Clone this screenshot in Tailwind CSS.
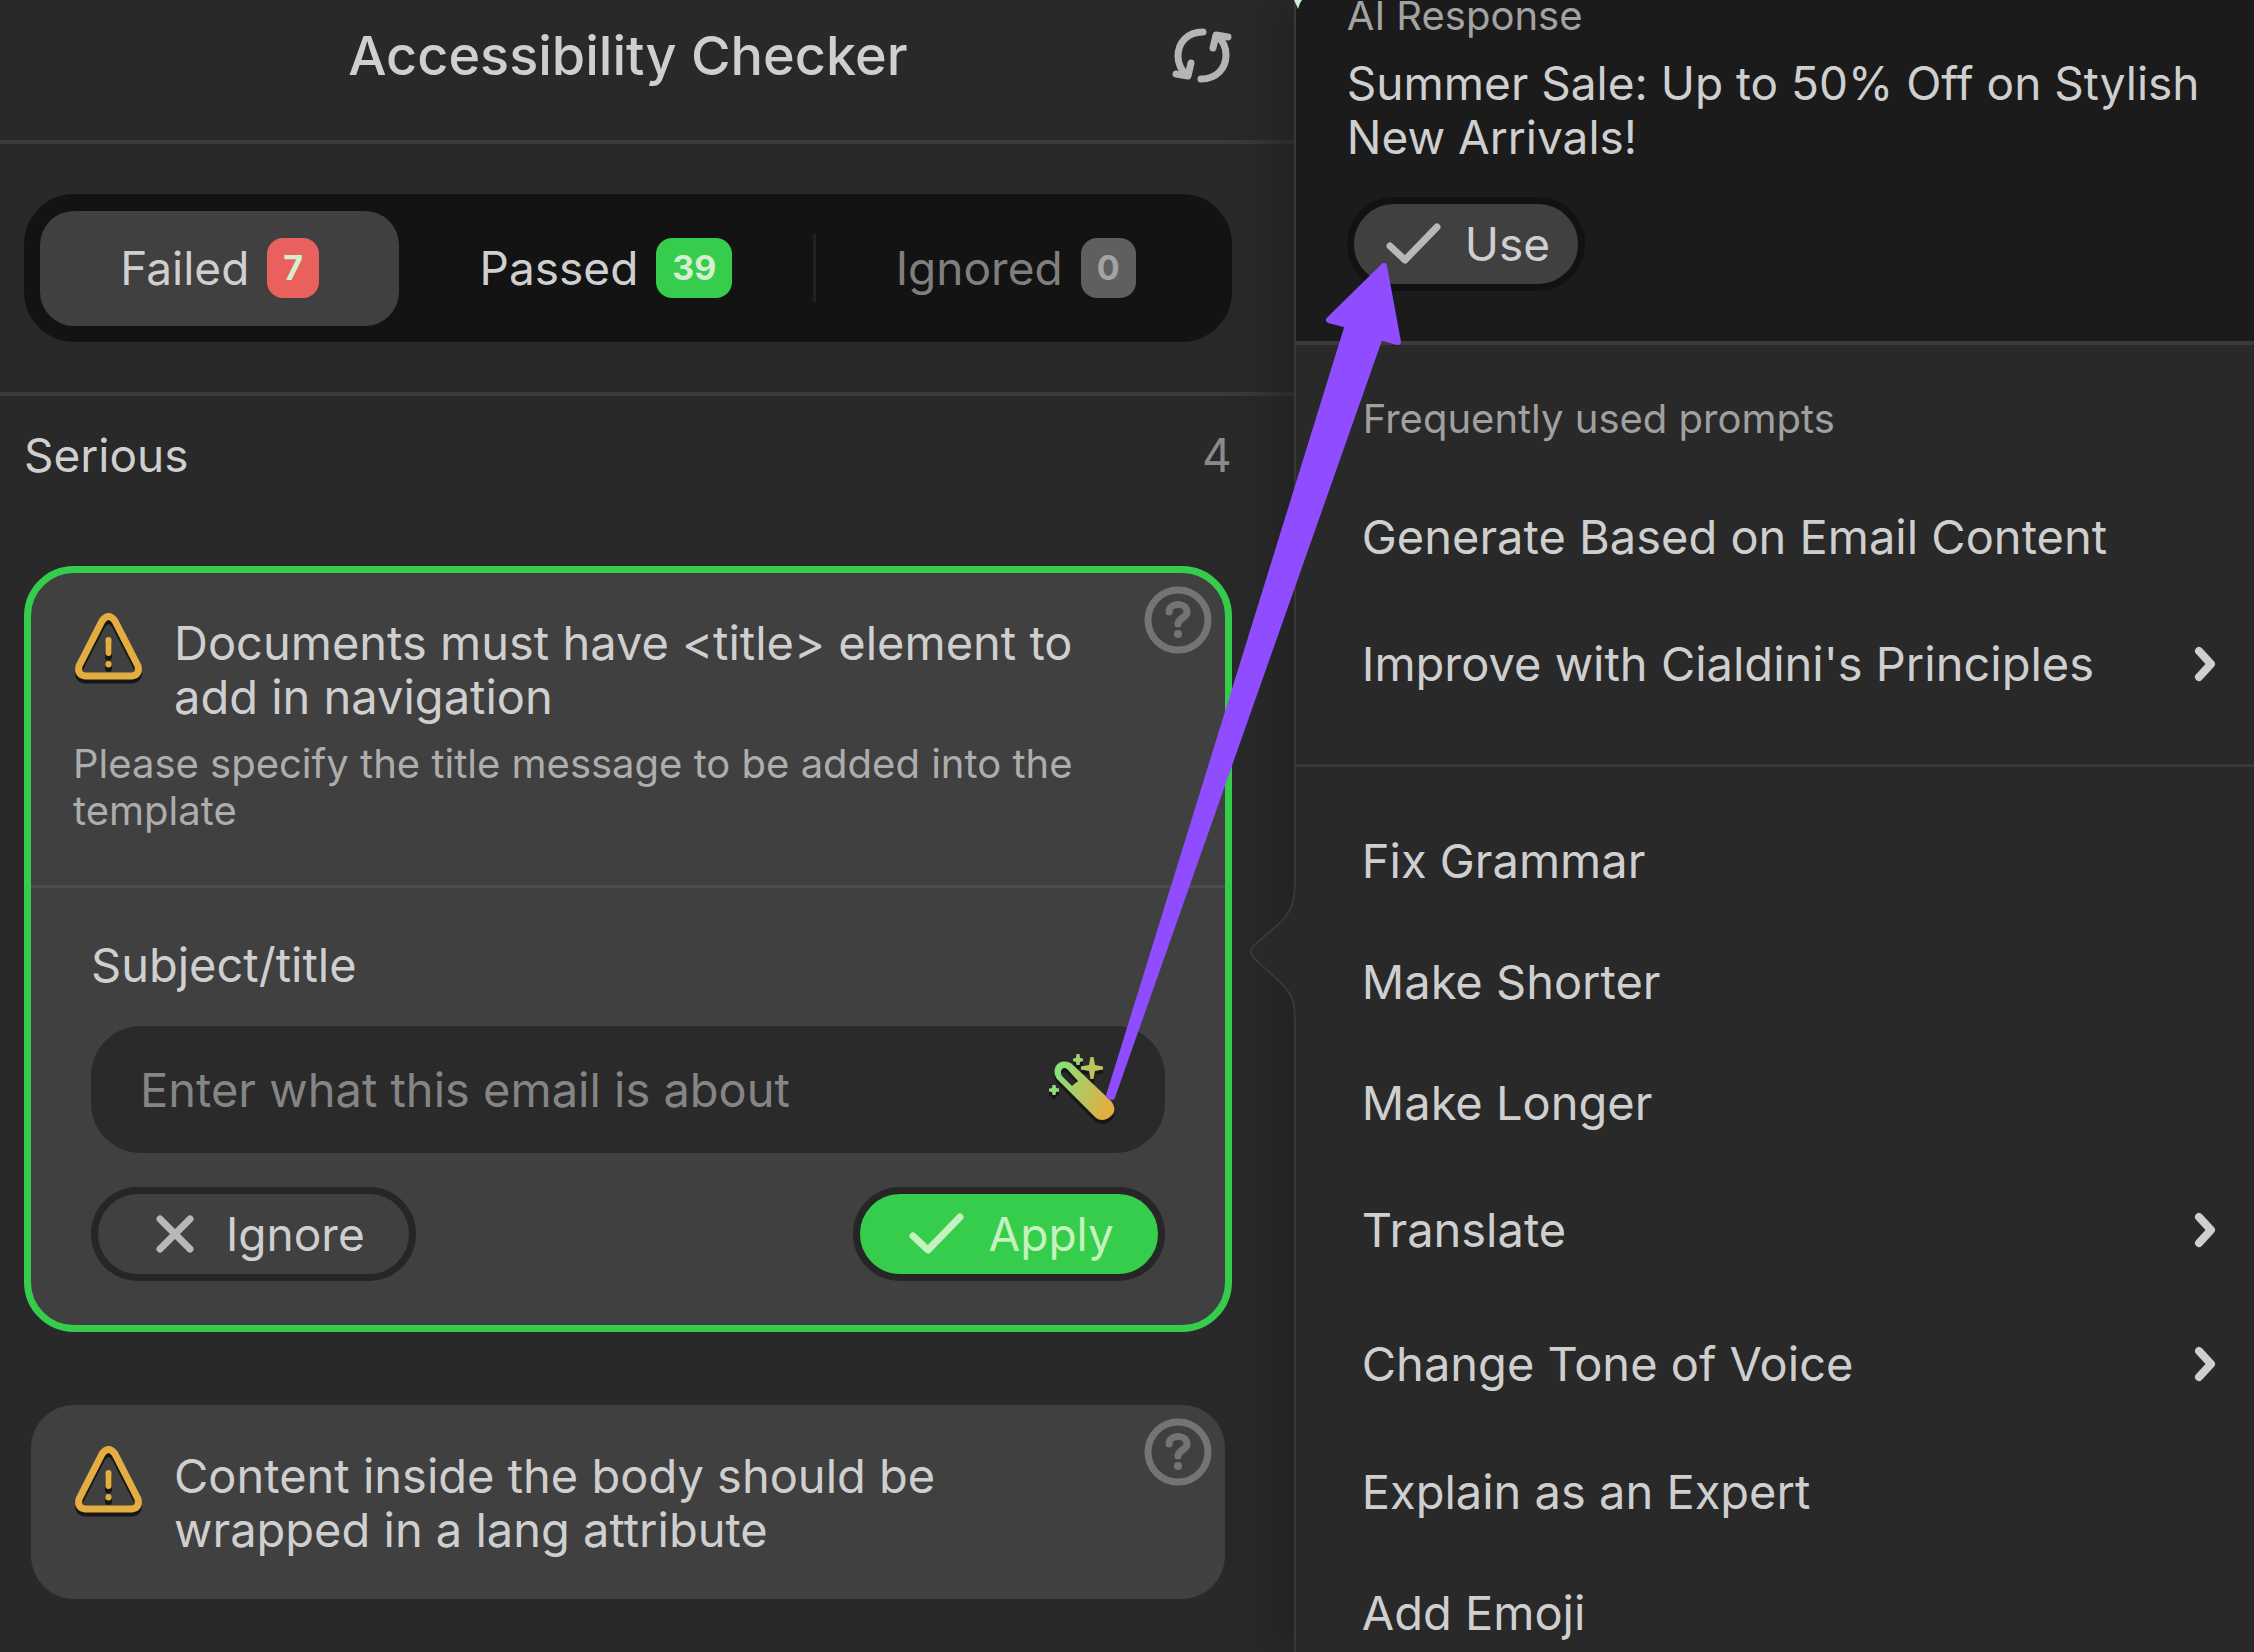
<!DOCTYPE html>
<html lang="en">
<head>
  <meta charset="UTF-8" />
  <meta name="viewport" content="width=device-width, initial-scale=1.0" />
  <title>Accessibility Checker</title>
  <script src="https://cdn.jsdelivr.net/npm/@tailwindcss/browser@4"></script>
</head>
<body class="bg-[#292929] font-['Inter','Liberation_Sans',sans-serif] text-[46px] leading-[54px] text-[#cfcfcf]">

<!-- shared icons -->
<svg class="hidden">
  <symbol id="warning" viewBox="0 0 72 76">
    <g fill="none" stroke-width="7" stroke-linecap="round" stroke-linejoin="round">
      <path stroke="#161616" transform="translate(0 4)" d="M29 11Q35.500 2 42 11L65 56Q67 65 59 66H12Q4 65 6 56ZM35.500 30V43M35.500 54V54.500" />
      <path stroke="#e3ad42" d="M29 11Q35.500 2 42 11L65 56Q67 65 59 66H12Q4 65 6 56Z" />
      <path stroke="#e3ad42" stroke-width="6" d="M35.500 30V43M35.500 54V54.500" />
    </g>
  </symbol>
  <symbol id="help" viewBox="0 0 68 68">
    <g fill="none" stroke="#747474" stroke-linecap="round">
      <circle cx="34" cy="34" r="30" stroke-width="7" />
      <path stroke-width="7" d="M25 26C25 16 43 16 43 26C43 32 34 32 34 38" />
    </g>
    <circle cx="34" cy="48" r="4" fill="#747474" />
  </symbol>
  <symbol id="check" viewBox="0 0 56 42">
    <path fill="none" stroke="currentColor" stroke-width="7" stroke-linecap="round" stroke-linejoin="round" d="M4 23L19 37L51 4" />
  </symbol>
  <symbol id="chevron" viewBox="0 0 22 36">
    <path fill="none" stroke="#cfcfcf" stroke-width="8" stroke-linecap="round" stroke-linejoin="round" d="M5 5L17 18L5 31" />
  </symbol>
</svg>

<main class="flex h-screen overflow-hidden">

  <!-- checker -->
  <section class="w-[57.4%] shrink-0">
    <header class="flex items-center border-b-4 border-[#3a3a3a] pt-[26px] pr-[62px] pb-[54px] pl-6">
      <div class="w-[60px]"></div>
      <h1 class="flex-1 text-center text-[54px] leading-[60px] font-medium">Accessibility Checker</h1>
      <button type="button" aria-label="Refresh">
        <svg class="h-[56px] w-[60px]" viewBox="0 0 60 56" fill="none" stroke="#b5b5b5" stroke-width="7" stroke-linecap="round" stroke-linejoin="round">
          <path d="M31 4C15 4 6 15 6 28C6 36 10 43 15 47M4 46L16 48L19 35" />
          <path d="M29 51C45 51 54 40 54 27C54 19 50 12 45 8M56 9L44 7L41 20" />
        </svg>
      </button>
    </header>

    <div class="border-b-4 border-[#3a3a3a] pt-[50px] pr-[62px] pb-[50px] pl-6">
      <div class="flex h-[148px] items-center rounded-[50px] bg-[#131313] px-4">
        <button type="button" class="flex h-[115px] flex-auto items-center justify-center gap-[18px] rounded-[34px] bg-[#404040]">
          Failed
          <span class="flex h-[60px] items-center rounded-2xl bg-[#e9605c] px-4 text-[34px] font-bold text-[#d3efd0]">7</span>
        </button>
        <button type="button" class="flex h-[115px] flex-auto items-center justify-center gap-[18px]">
          Passed
          <span class="flex h-[60px] items-center rounded-2xl bg-[#35cd4b] px-4 text-[34px] font-bold text-[#d3efd0]">39</span>
        </button>
        <div class="h-[68px] w-[3px] bg-[#222222]"></div>
        <button type="button" class="flex h-[115px] flex-auto items-center justify-center gap-[18px] text-[#7f7f7f]">
          Ignored
          <span class="flex h-[60px] items-center rounded-2xl bg-[#5f5f5f] px-4 text-[34px] font-bold text-[#a3a3a3]">0</span>
        </button>
      </div>
    </div>

    <div class="pt-[32px] pr-[62px] pl-6">
      <div class="flex justify-between">
        <h2>Serious</h2>
        <span class="text-[#8a8a8a]">4</span>
      </div>

      <article class="relative mt-[84px] rounded-[50px] border-7 border-[#35cd4b] bg-[#404040]">
        <button type="button" aria-label="Help" class="absolute top-[13px] right-[13px]"><svg class="size-[68px]"><use href="#help" /></svg></button>
        <div class="border-b-3 border-[#4b4f4b] pt-[43px] pr-[110px] pb-[51px] pl-[42px]">
          <div class="flex items-start gap-[29px]">
            <svg class="-mt-1.5 h-[76px] w-[72px] shrink-0"><use href="#warning" /></svg>
            <h3 class="text-[47px]">Documents must have &lt;title&gt; element to add in navigation</h3>
          </div>
          <p class="mt-4 text-[40px] leading-[47px] text-[#adadad]">Please specify the title message to be added into the template</p>
        </div>
        <form class="px-[60px] pt-[50px] pb-[44px]">
          <label for="subject" class="block text-[47px]">Subject/title</label>
          <div class="mt-[34px] flex h-[127px] items-center rounded-[50px] bg-[#2a2a2a] pr-12 pl-[49px]">
            <input id="subject" type="text" placeholder="Enter what this email is about" class="min-w-0 flex-1 text-[47px] outline-none placeholder:text-[#858585]" />
            <button type="button" aria-label="Write with AI">
              <svg class="h-[72px] w-[68px]" viewBox="0 0 68 72">
                <defs>
                  <linearGradient id="wand" gradientUnits="userSpaceOnUse" x1="4" y1="30" x2="62" y2="46">
                    <stop offset="0" stop-color="#86e07c" />
                    <stop offset="1" stop-color="#e3ad42" />
                  </linearGradient>
                  <g id="wand-shape">
                    <path fill-rule="evenodd" d="M8 25C4 19 5 12 10 9C15 6 21 8 24 11L62 47C66 52 67 58 62 62C57 67 50 67 46 63ZM13 22L23 32L29 27L19 16C14 11 10 17 13 22Z" />
                    <path d="M41.500 3H44.500L46 11L54 12.500V15.500L46 17L44.500 25H41.500L40 17L32 15.500V12.500L40 11Z" />
                    <path d="M27.500 0H30.500L31 4L34 4.500V7L31 8L30.500 11H27.500L27 8L24 7V4.500L27 4ZM3.500 31H6.500L7 34L10 34.500V37.500L7 38L6.500 41H3.500L3 38L0 37.500V34.500L3 34Z" />
                  </g>
                </defs>
                <use href="#wand-shape" y="4" fill="#161616" />
                <use href="#wand-shape" fill="url(#wand)" />
              </svg>
            </button>
          </div>
          <div class="mt-[34px] flex justify-between">
            <button type="button" class="flex h-[94px] items-center gap-[32px] rounded-full border-7 border-[#262626] pr-[44px] pl-[58px]">
              <svg class="size-[38px]" viewBox="0 0 38 38" fill="none" stroke="#b8b8b8" stroke-width="7" stroke-linecap="round"><path d="M4 4L34 34M34 4L4 34" /></svg>
              Ignore
            </button>
            <button type="button" class="flex h-[94px] items-center gap-[23px] rounded-full border-7 border-[#262626] bg-[#35cd4b] pr-[44px] pl-[49px] text-[#c6f2bf]">
              <svg class="h-[42px] w-[56px]"><use href="#check" /></svg>
              Apply
            </button>
          </div>
        </form>
      </article>

      <article class="relative mt-[66px] rounded-[50px] border-7 border-transparent bg-[#404040] bg-clip-padding pt-11 pr-[150px] pb-[42px] pl-[42px]">
        <button type="button" aria-label="Help" class="absolute top-[13px] right-[13px]"><svg class="size-[68px]"><use href="#help" /></svg></button>
        <div class="flex items-start gap-[29px]">
          <svg class="-mt-1.5 h-[76px] w-[72px] shrink-0"><use href="#warning" /></svg>
          <h3 class="text-[47px]">Content inside the body should be wrapped in a lang attribute</h3>
        </div>
      </article>
    </div>
  </section>

  <!-- AI assistant -->
  <aside class="relative min-w-0 flex-1 border-l-2 border-[#383838] bg-[#292929] shadow-[-28px_0_28px_#22222299]">
    <div class="border-b-4 border-[#3a3a3a] bg-[#1b1b1b] pr-6 pb-[50px] pl-[51px]">
      <h2 class="text-[40px] leading-8 text-[#a3a3a3]">AI Response</h2>
      <p class="mt-6">Summer Sale: Up to 50% Off on Stylish New Arrivals!</p>
      <button type="button" class="mt-[33px] flex h-[94px] items-center gap-[23px] rounded-full border-7 border-[#121212] bg-[#404040] pr-[28px] pl-[32px]">
        <svg class="h-[42px] w-[56px] text-[#b8b8b8]"><use href="#check" /></svg>
        Use
      </button>
    </div>

    <div class="border-b-3 border-[#383838] pt-[50px] pb-[33px]">
      <h2 class="mb-[34px] pl-[67px] text-[40px] leading-[47px] text-[#a0a0a0]">Frequently used prompts</h2>
      <ul class="text-[47px]">
        <li><button type="button" class="flex h-[121px] w-full items-center justify-between pr-[38px] pl-[66px]">Generate Based on Email Content</button></li>
        <li><button type="button" class="flex h-[134px] w-full items-center justify-between pr-[38px] pl-[66px]">Improve with Cialdini's Principles <svg class="h-[36px] w-[22px]"><use href="#chevron" /></svg></button></li>
      </ul>
    </div>

    <ul class="pt-[33px] text-[47px]">
      <li><button type="button" class="flex h-[121px] w-full items-center justify-between pr-[38px] pl-[66px]">Fix Grammar</button></li>
      <li><button type="button" class="flex h-[121px] w-full items-center justify-between pr-[38px] pl-[66px]">Make Shorter</button></li>
      <li><button type="button" class="flex h-[121px] w-full items-center justify-between pr-[38px] pl-[66px]">Make Longer</button></li>
      <li><button type="button" class="flex h-[134px] w-full items-center justify-between pr-[38px] pl-[66px]">Translate <svg class="h-[36px] w-[22px]"><use href="#chevron" /></svg></button></li>
      <li><button type="button" class="flex h-[134px] w-full items-center justify-between pr-[38px] pl-[66px]">Change Tone of Voice <svg class="h-[36px] w-[22px]"><use href="#chevron" /></svg></button></li>
      <li><button type="button" class="flex h-[121px] w-full items-center justify-between pr-[38px] pl-[66px]">Explain as an Expert</button></li>
      <li><button type="button" class="flex h-[121px] w-full items-center justify-between pr-[38px] pl-[66px]">Add Emoji</button></li>
    </ul>

    <!-- page showing behind the rounded corner -->
    <svg class="absolute top-0 -left-[2px] h-[10px] w-[10px]" viewBox="0 0 10 10">
      <path fill="#cfeed3" d="M0 0H8Q5 4 4 9Q2 4 0 0Z" />
    </svg>

    <!-- popover caret -->
    <svg class="absolute top-[880px] -left-[49px] h-[142px] w-[50px]" viewBox="0 0 50 142">
      <path fill="#292929" d="M50 0H48C48 22 44 30 36 40L9 64Q-1 71 9 80L36 105C44 114 48 120 48 142H50Z" />
      <path fill="none" stroke="#383838" stroke-width="2" d="M48 0C48 22 44 30 36 40L9 64Q-1 71 9 80L36 105C44 114 48 120 48 142" />
    </svg>

    <!-- pointer from the wand to the Use button -->
    <svg class="pointer-events-none absolute top-[260px] -left-[196px] h-[850px] w-[310px]" viewBox="0 0 310 850">
      <path fill="#8f4dff" stroke="#8f4dff" stroke-width="6" stroke-linejoin="round" d="M284 6L229 60L248 65L9 836L12 837L280 77L298 82Z" />
    </svg>
  </aside>
</main>
</body>
</html>
